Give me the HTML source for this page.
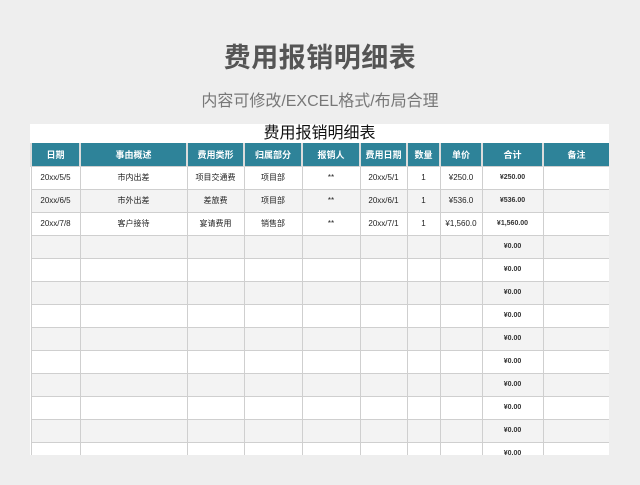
<!DOCTYPE html>
<html><head><meta charset="utf-8"><style>
*{margin:0;padding:0;box-sizing:border-box}
body{width:640px;height:485px;background:#eeeeee;font-family:"Liberation Sans","Noto Sans CJK SC",sans-serif;position:relative;overflow:hidden}
.t1{position:absolute;top:36px;left:0;width:640px;text-align:center;font-size:27px;font-weight:bold;color:#555;letter-spacing:0.5px}
.t2{position:absolute;top:87px;left:0;width:640px;text-align:center;font-size:16px;color:#777}
.wrap{position:absolute;left:30px;top:124px;width:579px;height:331px;overflow:hidden;background:#fff}
.cap{height:19px;text-align:center;font-size:16px;line-height:19px;color:#111}
table{border-collapse:collapse;table-layout:fixed;width:579px}
td{border:1px solid #cfcfcf;height:23px;text-align:center;font-size:8px;color:#222;padding:0;white-space:nowrap}
tr.h td{background:#2e8399;color:#fff;font-weight:bold;font-size:9px;border-color:#dcdcdc;border-width:0 2px}
tr.g td{background:#f3f3f3}
.s{font-size:7px;font-weight:bold;color:#333}
</style></head><body>
<div class="t1">费用报销明细表</div>
<div class="t2">内容可修改/EXCEL格式/布局合理</div>
<div class="wrap">
<div class="cap">费用报销明细表</div>
<table>
<colgroup><col style="width:49px"><col style="width:107px"><col style="width:57px"><col style="width:58px"><col style="width:58px"><col style="width:47px"><col style="width:33px"><col style="width:42px"><col style="width:61px"><col style="width:67px"></colgroup>
<tr class="h"><td>日期</td><td>事由概述</td><td>费用类形</td><td>归属部分</td><td>报销人</td><td>费用日期</td><td>数量</td><td>单价</td><td>合计</td><td>备注</td></tr>
<tr><td>20xx/5/5</td><td>市内出差</td><td>项目交通费</td><td>项目部</td><td>**</td><td>20xx/5/1</td><td>1</td><td>¥250.0</td><td class="s">¥250.00</td><td></td></tr>
<tr class="g"><td>20xx/6/5</td><td>市外出差</td><td>差旅费</td><td>项目部</td><td>**</td><td>20xx/6/1</td><td>1</td><td>¥536.0</td><td class="s">¥536.00</td><td></td></tr>
<tr><td>20xx/7/8</td><td>客户接待</td><td>宴请费用</td><td>销售部</td><td>**</td><td>20xx/7/1</td><td>1</td><td>¥1,560.0</td><td class="s">¥1,560.00</td><td></td></tr>
<tr class="g"><td></td><td></td><td></td><td></td><td></td><td></td><td></td><td></td><td class="s">¥0.00</td><td></td></tr>
<tr><td></td><td></td><td></td><td></td><td></td><td></td><td></td><td></td><td class="s">¥0.00</td><td></td></tr>
<tr class="g"><td></td><td></td><td></td><td></td><td></td><td></td><td></td><td></td><td class="s">¥0.00</td><td></td></tr>
<tr><td></td><td></td><td></td><td></td><td></td><td></td><td></td><td></td><td class="s">¥0.00</td><td></td></tr>
<tr class="g"><td></td><td></td><td></td><td></td><td></td><td></td><td></td><td></td><td class="s">¥0.00</td><td></td></tr>
<tr><td></td><td></td><td></td><td></td><td></td><td></td><td></td><td></td><td class="s">¥0.00</td><td></td></tr>
<tr class="g"><td></td><td></td><td></td><td></td><td></td><td></td><td></td><td></td><td class="s">¥0.00</td><td></td></tr>
<tr><td></td><td></td><td></td><td></td><td></td><td></td><td></td><td></td><td class="s">¥0.00</td><td></td></tr>
<tr class="g"><td></td><td></td><td></td><td></td><td></td><td></td><td></td><td></td><td class="s">¥0.00</td><td></td></tr>
<tr><td></td><td></td><td></td><td></td><td></td><td></td><td></td><td></td><td class="s">¥0.00</td><td></td></tr>
</table>
</div>
</body></html>
